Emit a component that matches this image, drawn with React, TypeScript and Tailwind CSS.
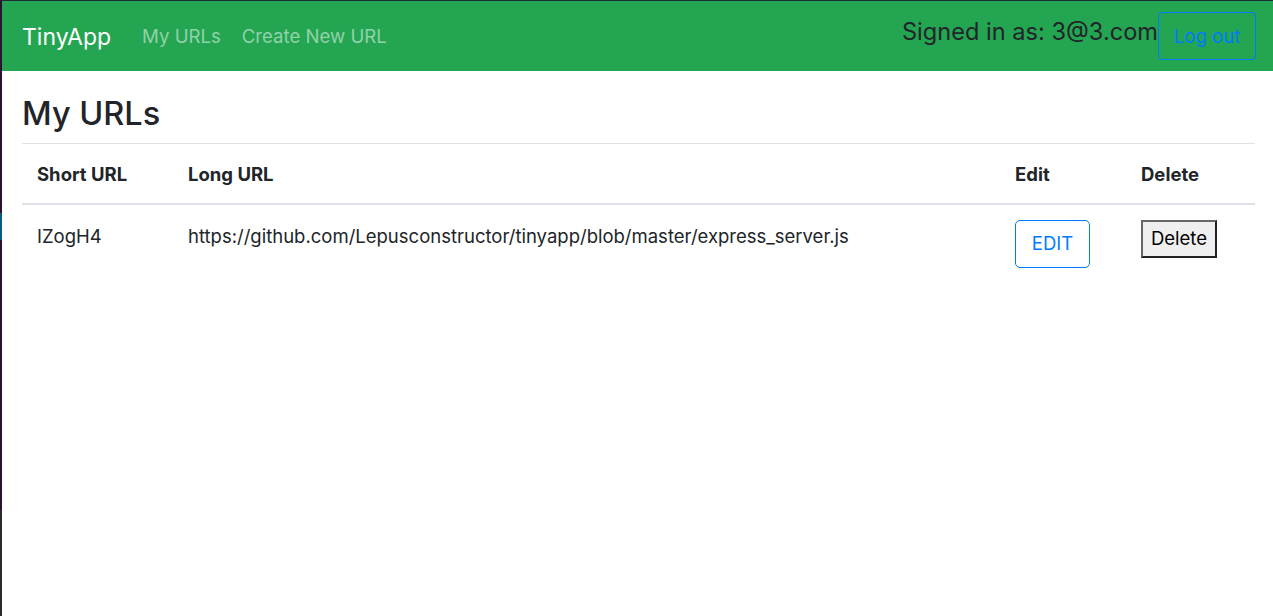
const urls = [
  {
    short: 'IZogH4',
    long: 'https://github.com/Lepusconstructor/tinyapp/blob/master/express_server.js',
  },
]

export default function App() {
  return (
    <div
      className="flex min-h-[616px] bg-white text-[#212529]"
      style={{ fontFamily: 'Inter, "Liberation Sans", Arial, sans-serif' }}
    >
      {/* window edge */}
      <div className="flex w-[2px] flex-col">
        <div className="h-[213px] bg-[#2a1232]" />
        <div className="h-[27px] bg-[#0b5a80]" />
        <div className="h-[270px] bg-[#2a1232]" />
        <div className="flex-1 bg-[#2b2b2b]" />
      </div>

      <div className="flex flex-1 flex-col">
        <nav className="flex h-[71px] items-center border-t border-[#1e2a36] bg-[#23a552] pl-[20px] pr-[17px] pt-[2px]">
          <span className="mr-[31px] text-[23px] text-white">TinyApp</span>
          <a className="mr-[21px] text-[18.6px] text-white/50">My URLs</a>
          <a className="text-[18.6px] text-white/50">Create New URL</a>
          <div className="ml-auto flex items-center">
            <span className="-mt-[10px] text-[23.6px] text-[#212529]">Signed in as: 3@3.com</span>
            <button className="-mt-[3px] flex h-[48px] w-[98px] items-center justify-center rounded-[4px] border border-[#007bff] pt-[2px] text-[18.6px] text-[#007bff]">
              Log out
            </button>
          </div>
        </nav>

        <main className="px-[20px] pr-[18px]">
          <h2 className="mt-[22px] text-[32.5px] font-medium leading-[42px]">My URLs</h2>
          <hr className="mt-[8px] border-[#dee2e6]" />
          <table className="w-full border-collapse text-left text-[18.5px]">
            <thead>
              <tr className="border-b-2 border-[#dee2e6]">
                <th className="h-[60px] w-[151px] px-[15px] pt-[3px] align-middle font-bold">Short URL</th>
                <th className="px-[15px] pt-[3px] align-middle font-bold">Long URL</th>
                <th className="w-[126px] px-[15px] pt-[3px] align-middle font-bold">Edit</th>
                <th className="w-[129px] px-[15px] pt-[3px] align-middle font-bold">Delete</th>
              </tr>
            </thead>
            <tbody>
              {urls.map(u => (
                <tr key={u.short}>
                  <td className="px-[15px] pt-[18px] align-top">{u.short}</td>
                  <td className="px-[15px] pt-[18px] align-top">{u.long}</td>
                  <td className="px-[15px] pt-[15px] align-top">
                    <button className="flex h-[48px] w-[75px] items-center justify-center rounded-[5px] border border-[#007bff] text-[18.5px] text-[#007bff]">
                      EDIT
                    </button>
                  </td>
                  <td className="px-[15px] pt-[15px] align-top">
                    <button className="flex h-[38px] w-[76px] items-center justify-center border-2 border-[#222] border-t-[#666] border-l-[#666] bg-[#efefef] text-[18.5px] text-black">
                      Delete
                    </button>
                  </td>
                </tr>
              ))}
            </tbody>
          </table>
        </main>
      </div>
    </div>
  )
}
